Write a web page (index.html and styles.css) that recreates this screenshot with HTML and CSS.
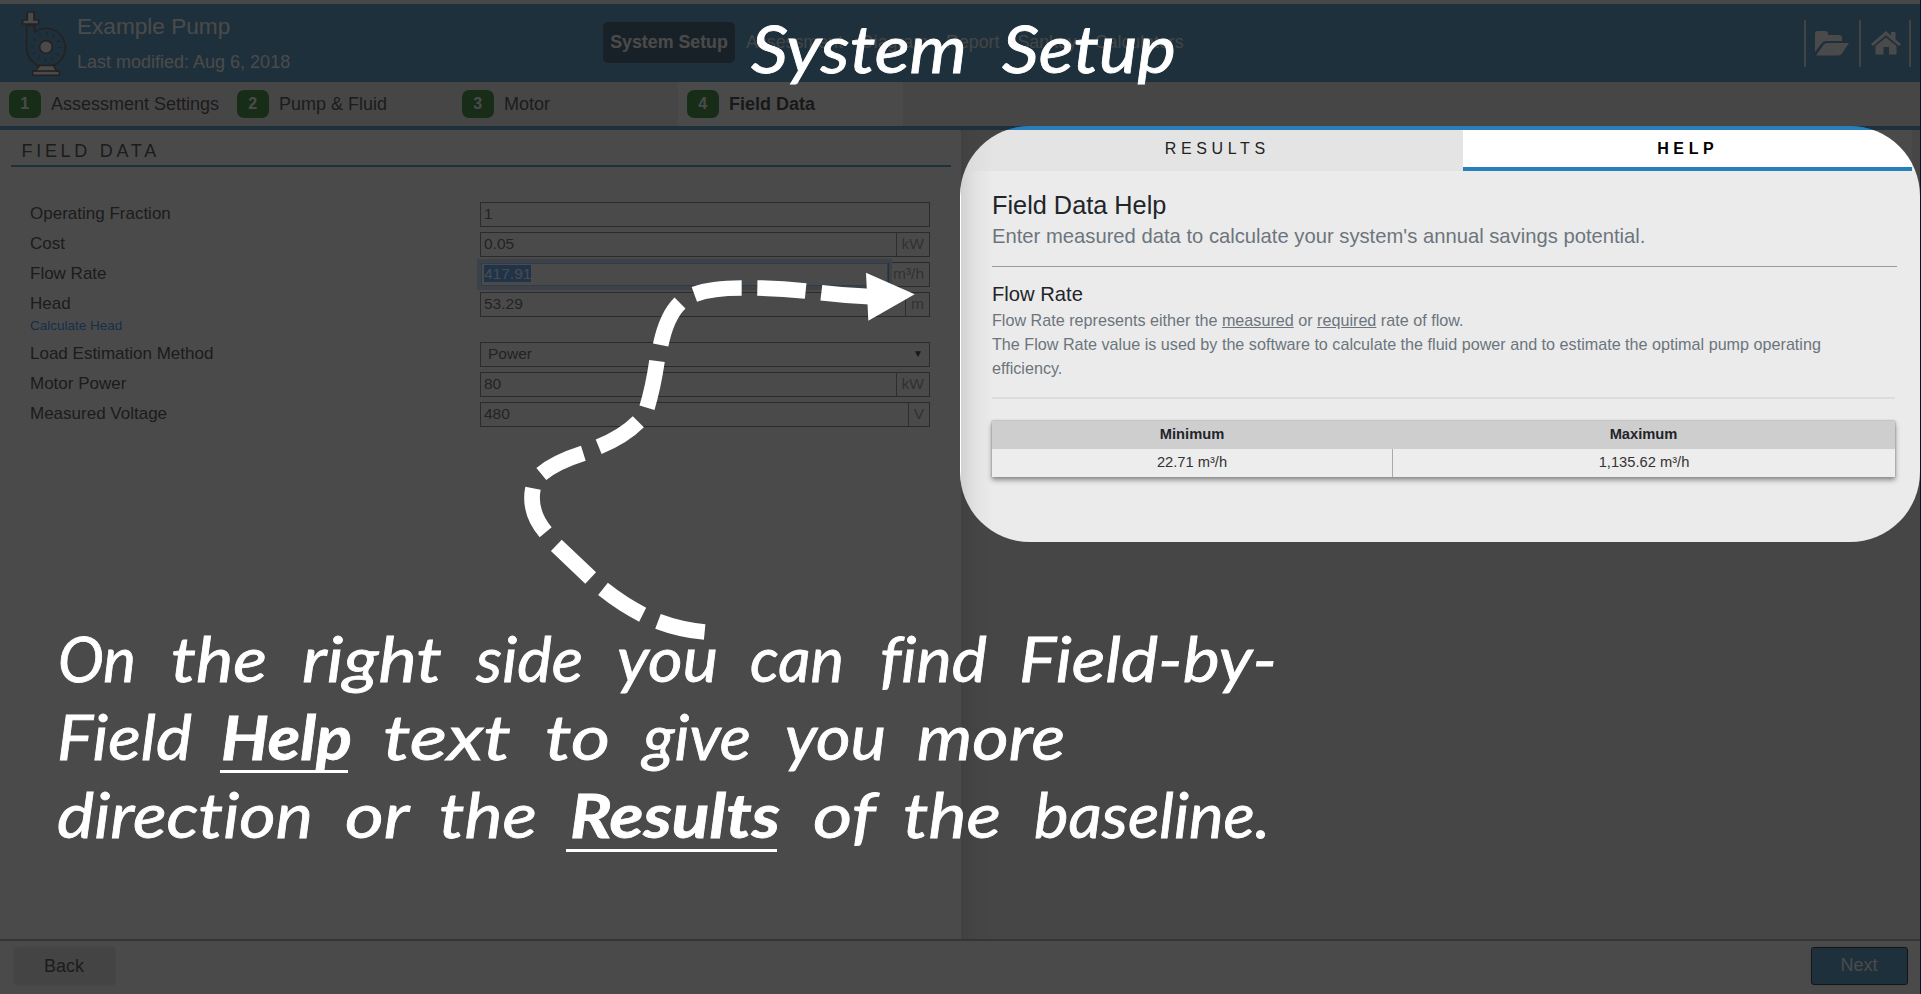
FILE: index.html
```html
<!DOCTYPE html>
<html lang="en">
<head>
<meta charset="utf-8">
<title>Example Pump – System Setup</title>
<link rel="stylesheet" href="styles.css">
</head>
<body>
<div class="app">
  <div class="strip"></div>
  <header class="header">
    <svg class="pump" width="48" height="70" viewBox="0 0 144 210">
      <g stroke="#4d3b3a" stroke-width="5" fill="#fff">
        <path d="M20 58V122A58 58 0 1 0 44 78V58Z" fill="none"/>
        <path d="M22 18H42V42H56V54H8V42H22Z"/>
        <path d="M60 178H100L110 195H118V208H38V195H46Z"/>
        <path d="M38 195H118"/>
        <circle cx="78" cy="123" r="19"/>
      </g>
      <circle cx="78" cy="123" r="40" fill="none" stroke="#4d3b3a" stroke-width="11" stroke-dasharray="3 17.94"/>
    </svg>
    <div class="titles">
      <div class="name">Example Pump</div>
      <div class="modified">Last modified: Aug 6, 2018</div>
    </div>
    <nav class="nav">
      <span class="nav-active">System Setup</span><span>Assessment</span><span>Diagram</span><span>Report</span><span>Sankey</span><span>Calculators</span>
    </nav>
    <div class="actions">
      <span class="action open"><svg width="35" height="26" viewBox="0 0 35 26"><path d="M0 22V4Q0 1 3 1H10Q13 1 13 4V5H24Q27 5 27 8V11H11Q8 11 6 14ZM1 25.500L8.500 15Q10 13 12 13H34L27 23.500Q25.500 25.500 23 25.500Z" fill="#fff"/></svg></span>
      <span class="action home"><svg width="30" height="24" viewBox="0 0 30 24"><path d="M15 0L20 4.500V1H24.500V8.500L30 13L28 15L15 4.300L2 15L0 13ZM15 6.500L25.500 15V23.500H18V16H12.500V23.500H4.500V15Z" fill="#fff"/></svg></span>
    </div>
  </header>
  <div class="steps">
    <div class="step first"><b>1</b><span>Assessment Settings</span></div>
    <div class="step"><b>2</b><span>Pump &amp; Fluid</span></div>
    <div class="step"><b>3</b><span>Motor</span></div>
    <div class="step current"><b>4</b><span>Field Data</span></div>
  </div>
  <main class="main">
    <section class="form-panel">
      <h2>FIELD DATA</h2>
      <div class="form">
        <div class="row"><label>Operating Fraction</label><div class="field"><span class="value">1</span></div></div>
        <div class="row"><label>Cost</label><div class="field"><span class="value">0.05</span><span class="unit">kW</span></div></div>
        <div class="row"><label>Flow Rate</label><div class="field"><span class="value focused"><mark>417.91</mark></span><span class="unit tight">m³/h</span></div></div>
        <div class="row"><label>Head</label><div class="field"><span class="value">53.29</span><span class="unit">m</span></div></div>
        <a class="calc">Calculate Head</a>
        <div class="row"><label>Load Estimation Method</label><div class="field select"><span class="value">Power</span><span class="caret">▼</span></div></div>
        <div class="row"><label>Motor Power</label><div class="field"><span class="value">80</span><span class="unit">kW</span></div></div>
        <div class="row"><label>Measured Voltage</label><div class="field"><span class="value">480</span><span class="unit">V</span></div></div>
      </div>
    </section>
    <aside class="side">
      <div class="tabs"><div class="tab">RESULTS</div><div class="tab tab-on">HELP</div></div>
      <div class="help">
        <h3>Field Data Help</h3>
        <p class="lead">Enter measured data to calculate your system's annual savings potential.</p>
        <h4>Flow Rate</h4>
        <p class="body">Flow Rate represents either the <u>measured</u> or <u>required</u> rate of flow.<br>The Flow Rate value is used by the software to calculate the fluid power and to estimate the optimal pump operating efficiency.</p>
        <div class="limits">
          <div class="cell head">Minimum</div><div class="cell head">Maximum</div>
          <div class="cell">22.71 m³/h</div><div class="cell split">1,135.62 m³/h</div>
        </div>
      </div>
    </aside>
  </main>
  <footer class="footer"><span class="btn">Back</span><span class="btn next">Next</span></footer>
  <div class="dim"><div class="spotlight"></div></div>
  <svg class="notes" width="1921" height="994" viewBox="0 0 1921 994">
    <g transform="translate(500 240) scale(.33333)" stroke="#fff" stroke-width="47" fill="none">
      <path d="M614 1176Q540 1169 474 1144M428 1124Q368 1094 309 1047M272 1014L169 916M137 877Q85 815 99 745M124 702Q168 666 250 640M296 620Q370 590 415 545M441 503Q460 440 471 363M482 315Q500 228 540 189M583 163Q635 144 725 144M772 144Q842 145 917 153M964 158Q1040 167 1110 170"/>
      <path d="M1098 98L1244 163L1105 242Z" fill="#fff" stroke="none"/>
    </g>
    <g class="hand">
      <text y="73" class="hand-title"><tspan x="751" textLength="216" lengthAdjust="spacingAndGlyphs">System</tspan> <tspan x="1002" textLength="174" lengthAdjust="spacingAndGlyphs">Setup</tspan></text>
      <text y="682"><tspan x="58" textLength="78" lengthAdjust="spacingAndGlyphs">On</tspan> <tspan x="171" textLength="96" lengthAdjust="spacingAndGlyphs">the</tspan> <tspan x="302" textLength="140" lengthAdjust="spacingAndGlyphs">right</tspan> <tspan x="476" textLength="107" lengthAdjust="spacingAndGlyphs">side</tspan> <tspan x="617" textLength="101" lengthAdjust="spacingAndGlyphs">you</tspan> <tspan x="750" textLength="94" lengthAdjust="spacingAndGlyphs">can</tspan> <tspan x="880" textLength="107" lengthAdjust="spacingAndGlyphs">find</tspan> <tspan x="1019" textLength="258" lengthAdjust="spacingAndGlyphs">Field-by-</tspan></text>
      <text y="760"><tspan x="57" textLength="135" lengthAdjust="spacingAndGlyphs">Field</tspan> <tspan class="strong" x="221" textLength="131" lengthAdjust="spacingAndGlyphs">Help</tspan> <tspan x="383" textLength="128" lengthAdjust="spacingAndGlyphs">text</tspan> <tspan x="545" textLength="65" lengthAdjust="spacingAndGlyphs">to</tspan> <tspan x="643" textLength="108" lengthAdjust="spacingAndGlyphs">give</tspan> <tspan x="785" textLength="101" lengthAdjust="spacingAndGlyphs">you</tspan> <tspan x="917" textLength="148" lengthAdjust="spacingAndGlyphs">more</tspan></text>
      <text y="838"><tspan x="57" textLength="256" lengthAdjust="spacingAndGlyphs">direction</tspan> <tspan x="345" textLength="63" lengthAdjust="spacingAndGlyphs">or</tspan> <tspan x="439" textLength="98" lengthAdjust="spacingAndGlyphs">the</tspan> <tspan class="strong" x="570" textLength="210" lengthAdjust="spacingAndGlyphs">Results</tspan> <tspan x="813" textLength="62" lengthAdjust="spacingAndGlyphs">of</tspan> <tspan x="903" textLength="98" lengthAdjust="spacingAndGlyphs">the</tspan> <tspan x="1034" textLength="236" lengthAdjust="spacingAndGlyphs">baseline.</tspan></text>
      <path class="rule" d="M220 770H348V773H220ZM566 849H777V852H566Z"/>
    </g>
  </svg>
</div>
</body>
</html>
```
FILE: styles.css
```css
* { box-sizing: border-box; }
body { margin: 0; font-family: "Liberation Sans", Arial, sans-serif; color: #222; }
.app { position: relative; width: 1921px; height: 994px; overflow: hidden; display: flex; flex-direction: column; background: #021530; }
.strip, .header, .steps, .main, .footer { width: 1920px; }
.strip { height: 4px; flex: none; background: #f4f4f4; }
.header { height: 78px; flex: none; background: #2980b9; color: #fff; display: flex; align-items: center; position: relative; }
.pump { margin: -4px 0 0 20px; }
.titles { margin-left: 9px; }
.name { font-size: 22.600px; line-height: 26px; }
.modified { font-size: 18px; line-height: 22px; margin-top: 11px; }
.nav { position: absolute; left: 603px; top: 18px; display: flex; height: 41px; align-items: center; font-size: 17.800px; }
.nav span { margin-right: 18px; color: #dfe6ea; }
.nav .nav-active { background: #123c58; color: #fff; font-weight: bold; height: 41px; line-height: 41px; width: 132px; text-align: center; border-radius: 5px; margin-right: 11px; }
.actions { margin-left: auto; margin-right: 9px; display: flex; height: 47px; border-right: 2px solid #ddd; }
.action { border-left: 2px solid #ddd; display: flex; align-items: center; }
.open { width: 55px; padding-left: 9px; }
.home { width: 50px; padding-left: 10px; }
.steps { height: 48px; flex: none; background: #e9e9e9; border-bottom: 4px solid #2980b9; display: flex; font-size: 18px; }
.step { width: 225px; padding-left: 9px; display: flex; align-items: center; }
.step.first { width: 228px; }
.step b { width: 31.500px; height: 28.500px; border-radius: 7px; background: #0a740a; color: #fff; display: grid; place-items: center; font-size: 16px; margin-right: 10.500px; }
.current { background: #fff; font-weight: bold; color: #111; }
.main { flex: 1; display: flex; min-height: 0; }
.form-panel { width: 961px; background: #fff; }
h2 { margin: 10px 10px 0 10.500px; height: 27px; padding: 1px 0 0 11px; font-size: 18px; line-height: 20px; letter-spacing: 3.700px; font-weight: normal; border-bottom: 2px solid #2980b9; }
.form { padding: 32px 31px 0 30px; }
.row { display: flex; height: 30px; }
.row label { width: 450px; font-size: 17px; line-height: 30px; }
.field { width: 450px; height: 25px; margin-top: 3px; border: 1.500px solid #6a6a6a; display: flex; font-size: 15.500px; line-height: 22px; color: #444; }
.value { flex: 1; padding-left: 3px; }
.unit { border-left: 1.500px solid #777; padding: 0 5px; color: #888; }
.unit.tight { padding: 0 5px 0 4px; }
.focused { box-shadow: 0 0 0 4px #bcd6ef, inset 0 0 0 1px #80bdff; }
mark { background: #3390ff; color: #fff; }
.select { align-items: center; }
.select .value { padding-left: 7px; }
.caret { font-size: 10px; padding-right: 6px; color: #111; }
.calc { display: block; height: 19.500px; font-size: 13.500px; line-height: 13px; color: #007bff; }
.side { width: 959px; position: relative; background: linear-gradient(90deg, #d2d2d2 0, #e2e2e2 14px, #ebebeb 32px); padding-left: 10px; }
.tabs { display: flex; width: 941px; height: 42px; }
.tab { width: 491.500px; height: 41px; background: rgba(215,215,215,.35); text-align: center; font-size: 16px; line-height: 38px; letter-spacing: 4.600px; padding-left: 1px; color: #222; }
.tab-on { width: 449.500px; background: #fff; border-bottom: 4px solid #2680ba; font-weight: bold; color: #000; }
.help { padding: 17px 23px 0 21px; }
h3 { margin: 0; font-size: 25.300px; line-height: 32px; font-weight: normal; color: #212529; }
.lead { margin: 1px 0 0; padding-bottom: 15px; font-size: 20.230px; line-height: 29px; color: #6c757d; border-bottom: 1.500px solid #999; height: 45px; }
h4 { margin: 16px 0 0; font-size: 20.200px; line-height: 23px; font-weight: normal; color: #212529; }
.body { margin: 0 2px 0 0; font-size: 16.170px; line-height: 24px; color: #6c757d; border-bottom: 2px solid #dcdcdc; height: 93px; padding: 2px 50px 0 0; }
.limits { margin: 22px 2px 0 0; display: grid; grid-template-columns: 400px 1fr; background: #ededed; box-shadow: 0 3px 5px #888, 0 0 2px #888; font-size: 14.700px; line-height: 27px; text-align: center; color: #333; }
.cell { height: 28px; }
.head { background: #cecece; font-weight: bold; color: #212529; }
.split { border-left: 1px solid #aaa; }
.footer { height: 55px; flex: none; background: #fff; border-top: 2px solid #999; display: flex; justify-content: space-between; padding: 6px 12.500px 6px 13.500px; }
.btn { width: 101px; height: 38px; background: #e0e0e0; border-radius: 3px; text-align: center; font-size: 18px; line-height: 38px; color: #222; box-shadow: 0 0 3px #ddd; }
.next { width: 97px; background: #2980b9; color: #fff; border: 1.500px solid #000; line-height: 35px; }
.dim { position: absolute; left: 0; top: 0; width: 1920px; height: 994px; overflow: hidden; }
.spotlight { position: absolute; left: 960px; top: 126px; width: 960px; height: 416px; border-radius: 70px; box-shadow: 0 0 0 1200px rgba(27,27,27,.793); }
.notes { position: absolute; left: 0; top: 0; }
.hand { fill: #fff; stroke: #fff; stroke-width: .8px; font-family: Lato, "Open Sans", sans-serif; font-style: italic; font-size: 62px; font-variant-ligatures: none; }
.hand-title { font-size: 66px; }
.strong { font-weight: bold; }
.rule { stroke: none; }
```
